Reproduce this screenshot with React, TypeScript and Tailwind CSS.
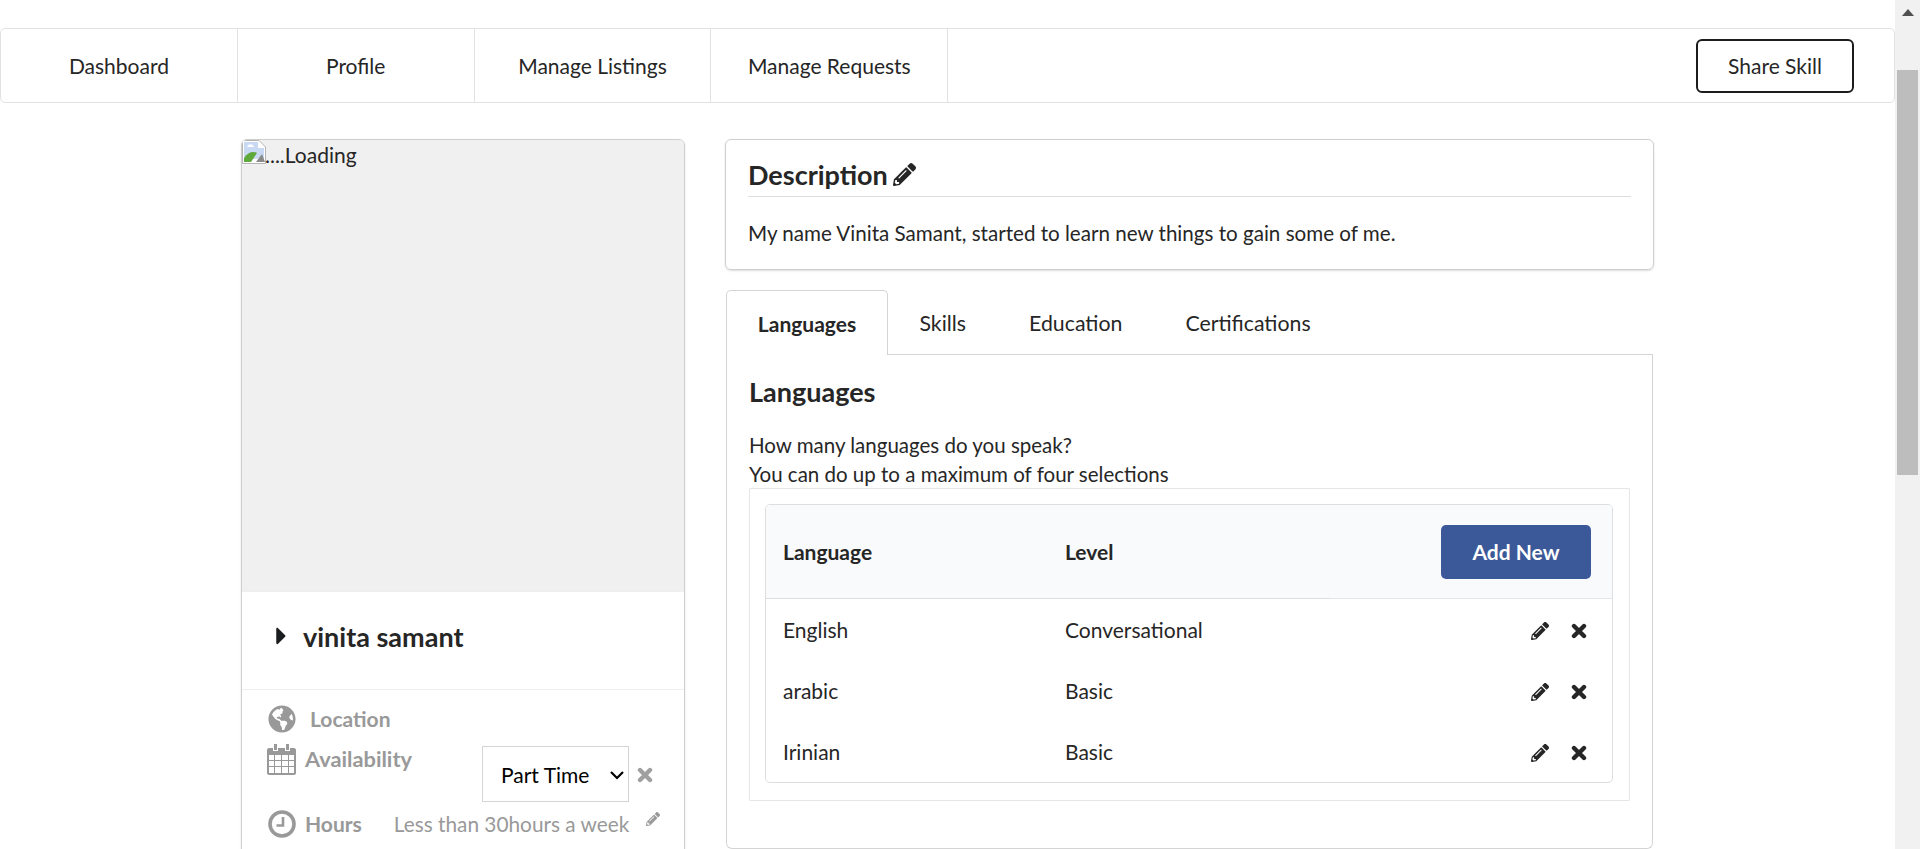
import { FaCaretRight, FaGlobeAmericas, FaPencilAlt } from "react-icons/fa";

const navItems = ["Dashboard", "Profile", "Manage Listings", "Manage Requests"];
const tabs = ["Skills", "Education", "Certifications"];
const languages = [
  { name: "English", level: "Conversational" },
  { name: "arabic", level: "Basic" },
  { name: "Irinian", level: "Basic" },
];

function BrokenImage() {
  return (
    <svg viewBox="0 0 24 24" className="h-[24px] w-[24px] shrink-0">
      <path d="M0.5 0.5H17L23.5 7V23.5H0.5Z" fill="#fff" stroke="#b4b4b4" />
      <path d="M2 2H16V8H22V18L2 20Z" fill="#c9d9f4" />
      <path d="M5 7C7 3 11 4 12 7Z" fill="#fff" />
      <path d="M2 22V18C6 12 11 11 15 13L9 22Z" fill="#5fa83c" />
      <path d="M14 22L20 14L23 22Z" fill="#8a8a8a" />
    </svg>
  );
}

function CalendarIcon() {
  return (
    <svg viewBox="0 0 29 31" className="h-[31px] w-[29px] shrink-0 text-[#999]" fill="currentColor">
      <path
        fillRule="evenodd"
        d="M2 4H6V7H11V4H18V7H23V4H27C28 4 29 5 29 6V29C29 30 28 31 27 31H2C1 31 0 30 0 29V6C0 5 1 4 2 4ZM2 11V29H27V11Z"
      />
      <path d="M7 0H10V6H7ZM19 0H22V6H19ZM2 16H27V17H2ZM2 22H27V23H2ZM7 11H8V29H7ZM14 11H15V29H14ZM21 11H22V29H21Z" />
    </svg>
  );
}

function ClockIcon() {
  return (
    <svg viewBox="0 0 28 28" className="ml-[1px] h-[28px] w-[28px] shrink-0" fill="none" stroke="currentColor">
      <circle cx="14" cy="14" r="12" strokeWidth="3.6" />
      <path d="M15 7V15.5H8.5" strokeWidth="2.6" />
    </svg>
  );
}

function CloseIcon({ className }: { className: string }) {
  return (
    <svg viewBox="0 0 16 16" className={className} fill="none" stroke="currentColor" strokeWidth="4.4" strokeLinecap="round">
      <path d="M3 3L13 13M13 3L3 13" />
    </svg>
  );
}

export default function App() {
  return (
    <div className="flex h-[849px] overflow-hidden bg-white text-[21px] leading-[29px] text-[#262626] font-['Lato','Liberation_Sans',sans-serif]">
      <div className="w-[1895px] shrink-0 pt-[28px]">
        <nav className="flex h-[75px] items-center justify-between rounded-[5px] border border-[#e2e2e3] pr-[40px]">
          <div className="flex h-full">
            {navItems.map((item) => (
              <a key={item} className="flex w-[236.8px] items-center justify-center border-r border-[#e2e2e3]">
                {item}
              </a>
            ))}
          </div>
          <button className="h-[54px] w-[158px] rounded-[6px] border-2 border-[#1b1c1d]">Share Skill</button>
        </nav>

        <div className="mt-[36px] flex gap-[40px] pl-[241px]">
          <aside className="h-[800px] w-[444px] shrink-0 overflow-hidden rounded-[6px] border border-[#cfcfd0] shadow-[0_1px_2px_0_rgba(34,36,38,0.15)]">
            <div className="flex h-[451px] items-start bg-[#f0f0f0]">
              <BrokenImage />
              <span className="-ml-[1px]">....Loading</span>
            </div>
            <div className="flex h-[99px] items-center border-y border-[#eeeeee] pb-[9px] pl-[31px]">
              <FaCaretRight className="mb-[1px] h-[28px] w-[17px] text-[#1b1c1d]" />
              <span className="ml-[13px] text-[27px] font-bold">vinita samant</span>
            </div>
            <div className="px-[25px] pt-[14px] text-[#999]">
              <div className="flex h-[29px] items-center">
                <FaGlobeAmericas className="ml-[1px] h-[28px] w-[28px]" />
                <span className="ml-[14px] font-bold">Location</span>
              </div>
              <div className="mt-[11px] flex items-start">
                <CalendarIcon />
                <span className="ml-[9px] text-[21.8px] font-bold">Availability</span>
                <div className="relative ml-auto mt-[2px]">
                  <select className="h-[56px] w-[147px] appearance-none border border-[#d4d4d5] bg-white pl-[18px] text-[21px] text-black">
                    <option>Part Time</option>
                  </select>
                  <svg viewBox="0 0 14 9" className="absolute right-[5px] top-[25px] h-[9px] w-[14px] text-black" fill="none" stroke="currentColor" strokeWidth="2.2">
                    <path d="M1 1L7 7L13 1" />
                  </svg>
                </div>
                <CloseIcon className="ml-[8px] mr-[6px] mt-[23px] h-[16px] w-[16px] text-[#a0a0a0]" />
              </div>
              <div className="mt-[7px] flex w-[393px] items-center">
                <ClockIcon />
                <span className="ml-[9px] font-bold">Hours</span>
                <span className="ml-[32px] whitespace-nowrap text-[20.8px]">Less than 30hours a week</span>
                <FaPencilAlt className="mb-[10px] ml-auto h-[14px] w-[14px]" />
              </div>
            </div>
          </aside>

          <main className="w-[929px] shrink-0">
            <section className="h-[131px] rounded-[6px] border border-[#cfcfd0] px-[22px] pt-[18px] shadow-[0_1px_2px_0_rgba(34,36,38,0.15)]">
              <h2 className="flex h-[39px] items-center gap-[5px] border-b border-[#dedede] pb-[6px] text-[27px] font-bold">
                Description
                <FaPencilAlt className="h-[23px] w-[23px]" />
              </h2>
              <p className="mt-[22px] text-[20.6px]">My name Vinita Samant, started to learn new things to gain some of me.</p>
            </section>

            <div className="ml-[1px] mt-[20px] flex h-[65px] w-[927px] items-stretch">
              <div className="z-10 flex h-[65px] w-[162px] items-center justify-center rounded-t-[5px] border border-b-0 border-[#d4d4d5] bg-white font-bold">
                Languages
              </div>
              <div className="flex flex-1 items-center border-b border-[#d4d4d5] pt-[2px] text-[21.3px]">
                {tabs.map((tab) => (
                  <span key={tab} className="px-[31.5px]">
                    {tab}
                  </span>
                ))}
              </div>
            </div>

            <section className="-mt-[1px] ml-[1px] h-[495px] w-[927px] rounded-b-[6px] border border-t-0 border-[#d4d4d5] px-[22px] pt-[20px]">
              <h3 className="text-[27px] font-bold leading-[36px]">Languages</h3>
              <p className="mt-[21px] text-[20.5px]">
                How many languages do you speak?
                <br />
                You can do up to a maximum of four selections
              </p>
              <div className="-mt-[1px] w-[881px] rounded-[1px] border border-[#e6e6e6] py-[15px] pb-[17px] pl-[15px] pr-[16px]">
                <table className="w-full table-fixed border-separate border-spacing-0 overflow-hidden rounded-[5px] border border-[#dededf] text-left">
                  <thead>
                    <tr className="h-[94px] bg-[#f9fafb]">
                      <th className="border-b border-[#dededf] pl-[17px] font-bold">Language</th>
                      <th className="border-b border-[#dededf] pl-[17px] font-bold">Level</th>
                      <th className="border-b border-[#e6e6e6] pr-[21px] text-right">
                        <button className="h-[54px] w-[150px] rounded-[5px] bg-[#3b5998] font-bold text-white">Add New</button>
                      </th>
                    </tr>
                  </thead>
                  <tbody>
                    {languages.map((row) => (
                      <tr key={row.name} className="h-[61px]">
                        <td className="pl-[17px]">{row.name}</td>
                        <td className="pl-[17px]">{row.level}</td>
                        <td>
                          <div className="flex items-center justify-end gap-[22px] pr-[25px] pt-[3px]">
                            <FaPencilAlt className="h-[18px] w-[18px]" />
                            <CloseIcon className="h-[16px] w-[16px]" />
                          </div>
                        </td>
                      </tr>
                    ))}
                  </tbody>
                </table>
              </div>
            </section>
          </main>
        </div>
      </div>

      <div className="flex w-[25px] shrink-0 flex-col items-center bg-[#f1f1f1]">
        <div className="mt-[9px] h-0 w-0 border-x-[6px] border-b-[7px] border-x-transparent border-b-[#505050]" />
        <div className="mt-[54px] h-[405px] w-[21px] bg-[#bdbdbd]" />
      </div>
    </div>
  );
}
